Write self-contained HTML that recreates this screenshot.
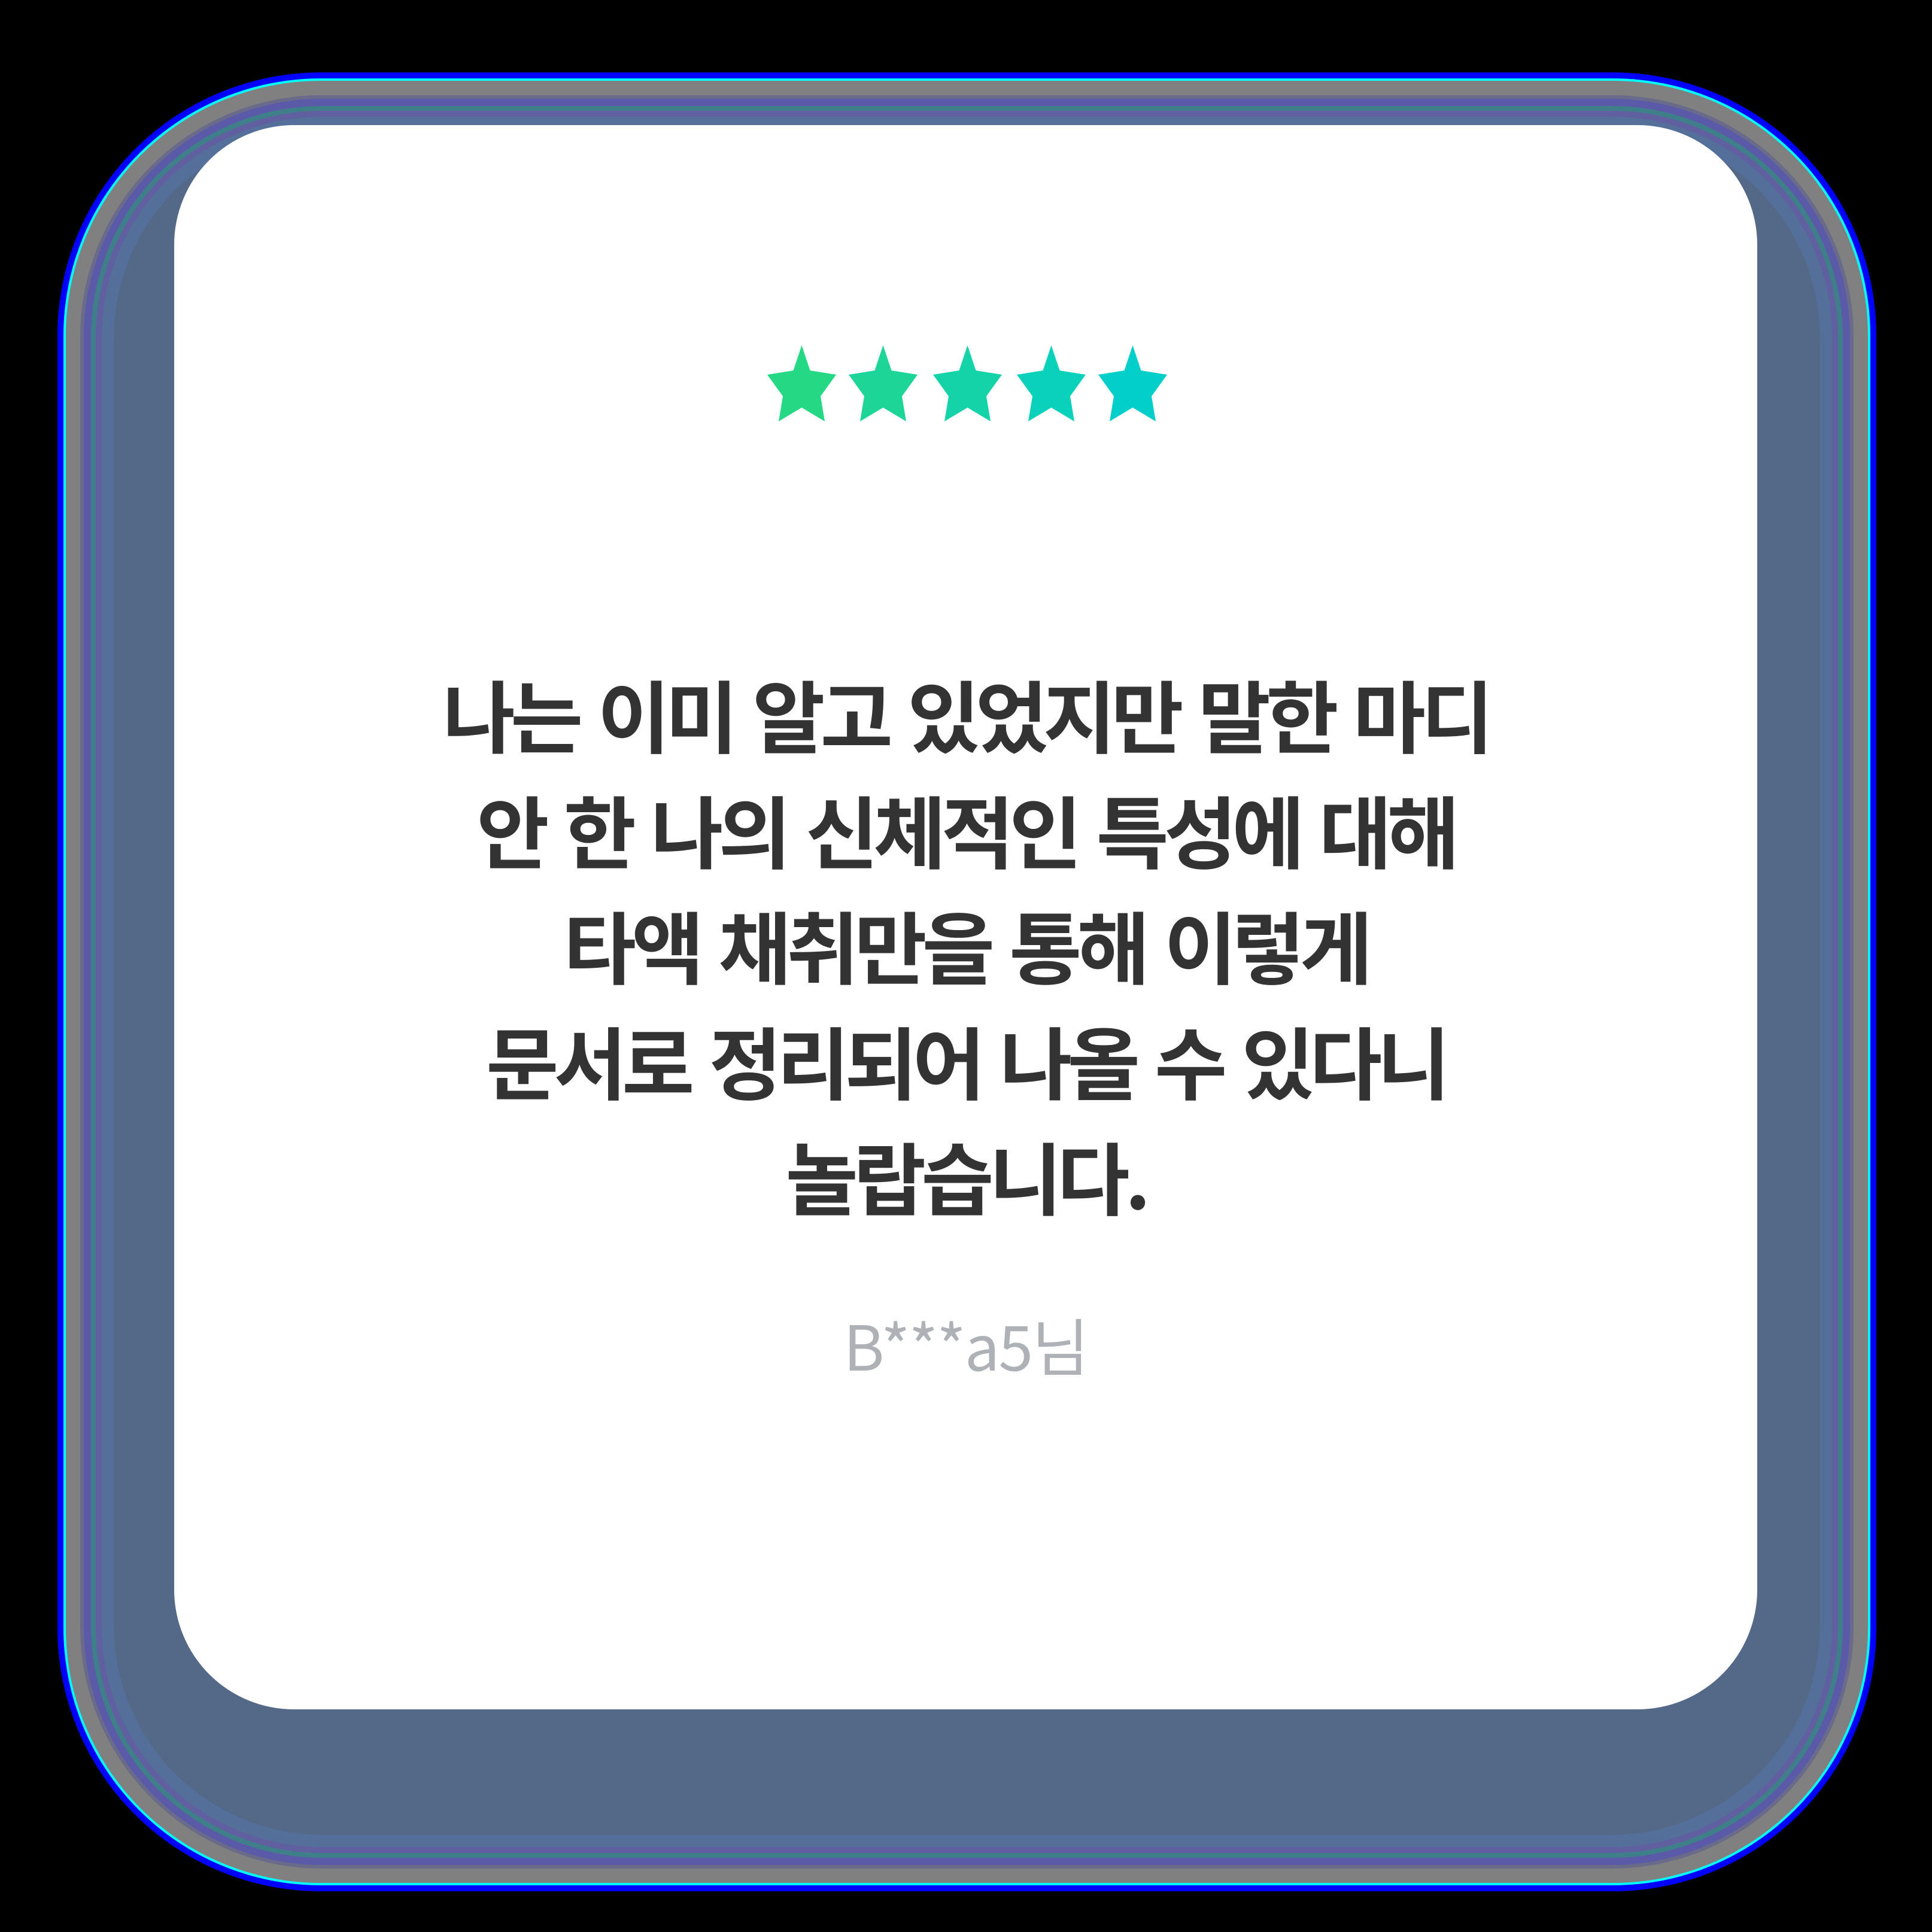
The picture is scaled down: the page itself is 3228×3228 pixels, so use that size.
<!DOCTYPE html>
<html><head><meta charset="utf-8"><style>
html,body{margin:0;padding:0;background:#000;}
body{width:3228px;height:3228px;position:relative;overflow:hidden;font-family:"Liberation Sans","Noto Sans CJK KR",sans-serif;}
.l{position:absolute;box-sizing:border-box;}
#o1{left:96px;top:121px;width:3039px;height:3039px;border-radius:440px;background:#0000ff;}
#o2{left:106px;top:131px;width:3019px;height:3019px;border-radius:430px;background:#00ffff;}
#o3{left:110px;top:135px;width:3011px;height:3011px;border-radius:426px;background:#808080;}
#o4{left:134px;top:159px;width:2963px;height:2963px;border-radius:404px;background:#6a6a8a;}
#o5{left:140px;top:165px;width:2951px;height:2951px;border-radius:398px;background:#5a5aa8;}
#o6{left:152px;top:177px;width:2927px;height:2927px;border-radius:386px;background:#3f7f8a;}
#o7{left:160px;top:185px;width:2911px;height:2911px;border-radius:378px;background:#6060a0;}
#o8{left:170px;top:195px;width:2891px;height:2891px;border-radius:368px;background:#54709a;}
#o9{left:190px;top:215px;width:2851px;height:2851px;border-radius:350px;background:#536987;}
#card{left:291px;top:209px;width:2645px;height:2647px;border-radius:200px;background:#fff;}
#stars{position:absolute;left:1270px;top:577px;}
#txt{position:absolute;left:291px;width:2645px;top:1095px;text-align:center;font-family:"Noto Sans CJK KR",sans-serif;font-weight:700;font-size:132px;line-height:193px;letter-spacing:-8px;word-spacing:10px;color:#333;}
#name{position:absolute;left:291px;width:2645px;top:2180px;text-align:center;font-family:"Noto Sans CJK KR",sans-serif;font-size:104px;line-height:130px;color:#aeb2b6;letter-spacing:-2px;}
</style></head><body>
<div class="l" id="o1"></div><div class="l" id="o2"></div><div class="l" id="o3"></div>
<div class="l" id="o4"></div><div class="l" id="o5"></div><div class="l" id="o6"></div>
<div class="l" id="o7"></div><div class="l" id="o8"></div><div class="l" id="o9"></div>
<div class="l" id="card"></div>
<svg id="stars" width="690" height="130" viewBox="0 0 690 130">
<defs><polygon id="s" points="66.5,0 80.5,42 124,49 98,85 105,127 66.5,104 28,127 35,85 9,49 52.5,42"/></defs>
<use href="#s" x="3" fill="#25d884"/><use href="#s" x="139" fill="#1dd596"/><use href="#s" x="280" fill="#14d3a8"/><use href="#s" x="420" fill="#0ad1ba"/><use href="#s" x="556" fill="#02cfca"/>
</svg>
<div id="txt">나는 이미 알고 있었지만 말한 마디<br>안 한 나의 신체적인 특성에 대해<br>타액 채취만을 통해 이렇게<br>문서로 정리되어 나올 수 있다니<br>놀랍습니다.</div>
<div id="name">B***a5님</div>
</body></html>
